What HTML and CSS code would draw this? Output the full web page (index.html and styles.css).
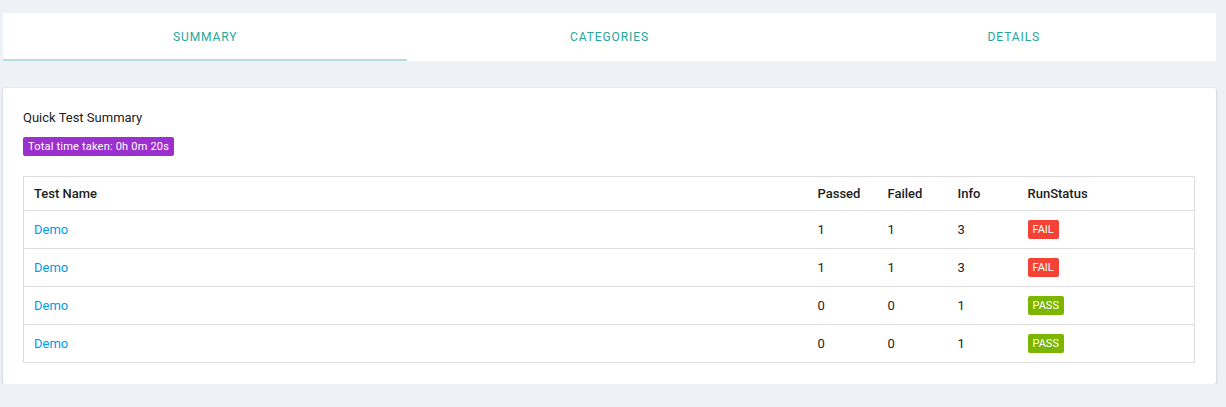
FILE: index.html
```html
<!DOCTYPE html>
<html>
<head>
<meta charset="utf-8">
<link rel="stylesheet" href="styles.css">
</head>
<body>
<div class="page">
  <nav class="tabs">
    <div class="tab active">Summary</div>
    <div class="tab">Categories</div>
    <div class="tab">Details</div>
  </nav>
  <section class="card">
    <div class="title">Quick Test Summary</div>
    <span class="badge purple">Total time taken: 0h 0m 20s</span>
    <table class="grid">
      <colgroup>
        <col class="c-name"><col class="c-num"><col class="c-num"><col class="c-num"><col>
      </colgroup>
      <thead>
        <tr><th>Test Name</th><th>Passed</th><th>Failed</th><th>Info</th><th>RunStatus</th></tr>
      </thead>
      <tbody>
        <tr><td><a class="link">Demo</a></td><td>1</td><td>1</td><td>3</td><td><span class="badge fail">FAIL</span></td></tr>
        <tr><td><a class="link">Demo</a></td><td>1</td><td>1</td><td>3</td><td><span class="badge fail">FAIL</span></td></tr>
        <tr><td><a class="link">Demo</a></td><td>0</td><td>0</td><td>1</td><td><span class="badge pass">PASS</span></td></tr>
        <tr><td><a class="link">Demo</a></td><td>0</td><td>0</td><td>1</td><td><span class="badge pass">PASS</span></td></tr>
      </tbody>
    </table>
  </section>
</div>
</body>
</html>
```
FILE: styles.css
```css
html, body {
  margin: 0;
  padding: 0;
  background: #eef1f6;
  font-family: Roboto, "Liberation Sans", sans-serif;
  color: #222;
}
.page {
  padding: 13px 10px 0 3px;
}
.tabs {
  display: flex;
  background: #fff;
  height: 48px;
}
.tab {
  flex: 1;
  display: flex;
  align-items: center;
  justify-content: center;
  text-transform: uppercase;
  font-size: 12px;
  letter-spacing: 0.9px;
  color: #26a69a;
  box-sizing: border-box;
}
.tab.active {
  border-bottom: 2px solid #b2dfdb;
  padding-top: 2px;
}
.card {
  margin-top: 27px;
  background: #fff;
  border-radius: 2px;
  box-shadow: 0 1px 3px rgba(0,0,0,0.22);
  padding: 20px 21px 21px 20px;
}
.title {
  font-size: 13px;
  line-height: 20px;
  color: #222;
  margin-bottom: 9px;
}
.badge {
  display: inline-block;
  font-size: 11px;
  line-height: 19px;
  height: 19px;
  padding: 0 5px;
  color: #fff;
  border-radius: 2px;
  vertical-align: top;
}
.purple {
  background: #9c30cf;
  letter-spacing: 0.2px;
}
.fail { background: #f44336; }
.pass { background: #7cb602; }
.grid {
  margin-top: 20px;
  width: 100%;
  border-collapse: collapse;
  table-layout: fixed;
  border: 1px solid #ddd;
  font-size: 13px;
}
.c-name { width: 784px; }
.c-num { width: 70px; }
.grid th {
  text-align: left;
  font-weight: 500;
  height: 33px;
  padding: 0 10px;
  border-bottom: 1px solid #ddd;
  color: #222;
}
.grid td {
  height: 37px;
  padding: 0 10px;
  border-bottom: 1px solid #ddd;
  vertical-align: middle;
  color: #222;
}
.grid td .badge { vertical-align: middle; }
.link {
  color: #039be5;
  text-decoration: none;
}
```
